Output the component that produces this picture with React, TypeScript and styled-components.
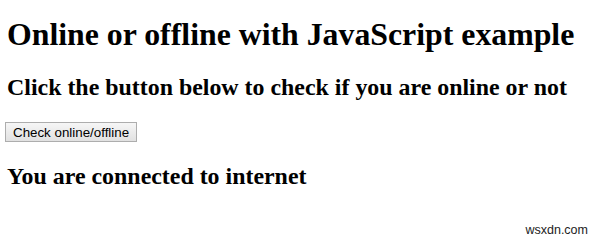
import * as React from "react";
import styled, { createGlobalStyle } from "styled-components";

const GlobalStyle = createGlobalStyle`
  html, body {
    margin: 0;
    background: #fff;
  }
  body {
    font-family: "Liberation Serif", "Times New Roman", serif;
    color: #000;
  }
`;

const Page = styled.div`
  position: relative;
  width: 600px;
  height: 243px;
  padding: 0 8px 0 7px;
  box-sizing: border-box;
  overflow: hidden;
`;

const Title = styled.h1`
  font-size: 31.8px;
  font-weight: bold;
  margin: 16px 0 0;
  line-height: 37px;
`;

const Subtitle = styled.h2`
  font-size: 23.9px;
  font-weight: bold;
  margin: 20px 0 0;
  line-height: 28px;
`;

const CheckButton = styled.button`
  display: block;
  margin: 21px 0 0 -2px;
  font-family: "Liberation Sans", Arial, sans-serif;
  font-size: 13.33px;
  padding: 0 7px;
  height: 20px;
  border: 1px solid #adadad;
  border-radius: 0;
  background: linear-gradient(#f6f6f6, #e1e1e1);
  color: #000;
`;

const Status = styled.h3`
  font-size: 23.9px;
  font-weight: bold;
  margin: 20px 0 0;
  line-height: 28px;
`;

const Watermark = styled.span`
  position: absolute;
  right: 12px;
  bottom: 6px;
  font-family: "Liberation Sans", Arial, sans-serif;
  font-size: 12.5px;
  color: #222;
`;

export default function App() {
  const [online, setOnline] = React.useState(true);
  return (
    <Page>
      <GlobalStyle />
      <Title>Online or offline with JavaScript example</Title>
      <Subtitle>Click the button below to check if you are online or not</Subtitle>
      <CheckButton onClick={() => setOnline(navigator.onLine)}>
        Check online/offline
      </CheckButton>
      <Status>
        {online ? "You are connected to internet" : "You are not connected to internet"}
      </Status>
      <Watermark>wsxdn.com</Watermark>
    </Page>
  );
}
